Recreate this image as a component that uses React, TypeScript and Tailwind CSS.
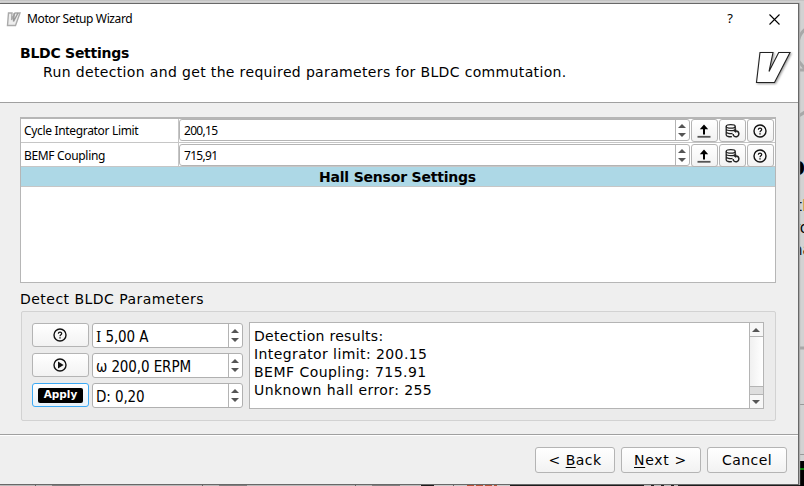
import React from "react";

const dejavu = "font-['DejaVu_Sans',sans-serif]";
const segoe = "font-['Noto_Sans',sans-serif]";

function HelpIcon() {
  return (
    <svg width="14" height="14" viewBox="0 0 14 14" fill="none" stroke="#111" className="mr-px shrink-0">
      <circle cx="7" cy="7" r="6" strokeWidth="1.4" />
      <path d="M5.300 5.700c.1-2 3.400-2 3.400-.1C8.700 6.900 7 6.700 7 8.200" strokeWidth="1.2" />
      <path d="M7 9.300v1.300" strokeWidth="1.4" />
    </svg>
  );
}

function PlayIcon() {
  return (
    <svg width="14" height="14" viewBox="0 0 14 14" className="mr-px shrink-0">
      <circle cx="7" cy="7" r="6" fill="none" stroke="#111" strokeWidth="1.4" />
      <path d="M5 3.600 10.600 7 5 10.400z" fill="#111" />
    </svg>
  );
}

function UploadIcon() {
  return (
    <svg width="14" height="14" viewBox="0 0 14 14" className="mr-px shrink-0">
      <path d="M7 .5 11.200 5.200H8v5.300H6V5.200H2.800z" fill="#000" />
      <path d="M.5 12.800h13" stroke="#555" strokeWidth="1.800" />
    </svg>
  );
}

function DatabaseIcon() {
  return (
    <svg width="15" height="14" viewBox="0 0 15 14" fill="none" stroke="#222" strokeWidth="1.300" className="shrink-0">
      <ellipse cx="5.700" cy="2.400" rx="4.500" ry="1.700" />
      <path d="M1.200 2.400v2.500c0 2.200 9 2.200 9 0V2.400M1.200 5v2.800c0 1.700 4 2.100 6.300 1.500M1.200 8v2.900c0 1.600 3.400 2.100 5.700 1.700" />
      <path d="M10.800 6.900c3.600-.3 4.100 4.900 1 5.800-2 .5-3.700-.8-3.700-2.700" strokeWidth="1.500" />
      <path d="M11.200 4.600v4.400L8.300 6.900z" fill="#222" stroke="none" />
    </svg>
  );
}

function Arrows() {
  return (
    <span className="flex h-full w-[14px] shrink-0 flex-col items-center justify-center gap-[5px] border-l border-[#b4b4b4] pr-px">
      <svg width="8" height="4" viewBox="0 0 8 4"><path d="M0 4 4 0l4 4z" fill="#555" /></svg>
      <svg width="8" height="4" viewBox="0 0 8 4"><path d="M0 0h8L4 4z" fill="#555" /></svg>
    </span>
  );
}

const face = "flex shrink-0 items-center justify-center rounded-[3px] border border-[#b4b4b4] bg-linear-to-b from-white to-[#f2f2f2]";

function ParamRow({ label, value, second = false }: { label: string; value: string; second?: boolean }) {
  return (
    <div className={`flex h-6 border-b border-[#c6c6c6] text-[12px] ${segoe}`}>
      <div className={`flex w-[158px] items-center border-r border-[#c6c6c6] pl-[3px] tracking-[-0.33px] ${second ? "pt-[2px]" : ""}`}>{label}</div>
      <div className={`flex ${second ? "pt-px" : ""}`}>
        <div className="flex h-[22px] w-[511px] items-center overflow-hidden rounded-[3px] border border-[#b4b4b4] bg-white">
          <span className="flex-1 pl-1 pt-px tracking-[-0.7px]">{value}</span>
          <Arrows />
        </div>
        <div className="ml-px flex gap-px">
          <button className={`h-[23px] w-[27px] ${face}`}><UploadIcon /></button>
          <button className={`h-[23px] w-[27px] ${face}`}><DatabaseIcon /></button>
          <button className={`h-[23px] w-[27px] ${face}`}><HelpIcon /></button>
        </div>
      </div>
    </div>
  );
}

function DetectRow({ icon, value, active = false }: { icon: React.ReactNode; value: React.ReactNode; active?: boolean }) {
  return (
    <div className="flex h-[25px] gap-[3px]">
      <button className={active
        ? "flex h-6 w-[57px] shrink-0 items-center justify-center rounded-[3px] border border-[#3daaf5] bg-linear-to-b from-white to-[#e8f2fa]"
        : `h-6 w-[57px] ${face}`}>{icon}</button>
      <div className="flex h-[25px] w-[151px] items-center overflow-hidden rounded-[3px] border border-[#b0b0b0] bg-white">
        <span className="flex-1 whitespace-nowrap pl-[3px] pt-[3px] font-['DejaVu_Sans_Condensed','DejaVu_Sans',sans-serif] text-[15px] tracking-[-0.1px] [font-stretch:condensed]">{value}</span>
        <Arrows />
      </div>
    </div>
  );
}

function Background() {
  return (
    <svg className="absolute inset-0" width="804" height="486" aria-hidden="true">
      <rect width="804" height="486" fill="#d2d2d2" />
      <path d="M0 .5h804" stroke="#c4c4c4" />
      <path d="M807 28q-8 5-9 15M796 58l10 12h-10M797 117l8-5M797 348h7" fill="none" stroke="#a8a8a8" strokeWidth="3" />
      <path d="M798 404.500h6M798 454.500h6" stroke="#999" />
      <path d="M798 461h6v25h-6z" />
      <path d="M798 469h6" stroke="#087f08" strokeWidth="2" />
      <rect y="485" width="420" height="1" fill="#bdbdbd" />
      <path d="M35.500 485v1M202.500 485v1M355.500 485v1M453.500 485v1" stroke="#555" />
      <path d="M52 485.500h28M219 485.500h28M372 485.500h28" stroke="#777" />
      <path d="M421 485.500h13M510 485.500h294" stroke="#000" />
      <path d="M467 485.500h30" stroke="#b84020" strokeDasharray="7 2" />
      <path d="M644 485.500h34" stroke="#bbb" strokeDasharray="7 3" />
    </svg>
  );
}

export default function App() {
  return (
    <div className={`relative h-[486px] w-[804px] overflow-hidden pt-[3px] text-black ${dejavu}`}>
      <Background />
      <div className="absolute left-[799px] top-[152px] w-[100px] text-[15px]" aria-hidden="true">
        <div className="-ml-[11px] text-[24px] font-bold leading-[30px]">p</div>
        <div className="-ml-[3px] mt-[13px] leading-[22px]">t<span className="text-[#dc9648]">l</span></div>
        <div className="-ml-[5px] leading-[22px]">ro</div>
        <div className="-ml-[6px] leading-[22px]">na</div>
      </div>

      <main className="relative flex h-[482px] w-[799px] flex-col border-b border-r border-t border-[#686868] bg-[#efefef] shadow-[1px_0_1px_#aaa]">
        <header className="h-[99px] shrink-0 border-b border-[#a0a0a0] bg-white">
          <div className={`flex h-[30px] items-center text-[12px] ${segoe}`}>
            <svg className="ml-[6px] shrink-0" width="16" height="15" viewBox="0 0 16 15">
              <path d="M2.500 1H6l-.4 7L9 1h5L9.500 13.500H1.500z" fill="#eee" stroke="#aaa" strokeWidth="1.400" />
              <path d="M8.200 1 7.500 9.500 12 1" fill="none" stroke="#999" strokeWidth="1.400" />
            </svg>
            <span className="ml-[5px] flex-1 tracking-[-0.38px]">Motor Setup Wizard</span>
            <span className="mr-[36px] text-[13px]">?</span>
            <svg className="mr-[18px]" width="11" height="11" viewBox="0 0 11 11"><path d="m.5.5 10 10m0-10-10 10" stroke="#000" strokeWidth="1.100" /></svg>
          </div>
          <div className="flex">
            <div className="flex-1 pl-5 pt-[10px]">
              <h1 className="text-[14px] font-bold leading-[18px] tracking-[-0.26px]">BLDC Settings</h1>
              <p className="whitespace-nowrap pl-[23px] pt-px text-[14px] leading-[18px] tracking-[0.35px]">Run detection and get the required parameters for BLDC commutation.</p>
            </div>
            <svg className="mr-[4px] mt-[15px] drop-shadow-[1px_1px_1px_#999]" width="42" height="36" viewBox="0 0 42 36">
              <path d="M8 3.500H21L17 22.500 26.700 3.500H38L22.500 33.500H4.500z" fill="white" stroke="#222" strokeWidth="1.100" />
            </svg>
          </div>
        </header>

        <section className="ml-5 mr-[22px] mt-[14px] h-[166px] shrink-0 border border-t-2 border-[#b6b6b6] bg-white">
          <ParamRow label="Cycle Integrator Limit" value="200,15" />
          <ParamRow second label="BEMF Coupling" value="715,91" />
          <div className="h-5 border-b border-[#c6c6c6] bg-[#add8e6] pr-px pt-px text-center text-[14px] font-bold leading-[19px] tracking-[-0.2px]">Hall Sensor Settings</div>
        </section>

        <h2 className="ml-5 mt-[7px] text-[14px] leading-[18px] tracking-[0.47px]">Detect BLDC Parameters</h2>
        <section className="ml-[21px] mt-[3px] flex h-[110px] w-[755px] shrink-0 gap-[6px] rounded-[2px] border border-[#d2d2d2] bg-[#ebebeb] pl-[10px] pt-[11px]">
          <div className="flex flex-col gap-[5px]">
            <DetectRow icon={<HelpIcon />} value={<><span className="font-['DejaVu_Serif',serif]">I</span> 5,00 A</>} />
            <DetectRow icon={<PlayIcon />} value="ω 200,0 ERPM" />
            <DetectRow active icon={<span className="flex h-[15px] w-[45px] items-center justify-center rounded-[2px] bg-black text-[10.500px] font-bold text-white">Apply</span>} value="D: 0,20" />
          </div>
          <div className="-mt-px flex h-[87px] w-[515px] border border-[#b4b4b4] bg-white">
            <div className="flex-1 pl-1 pt-[4px] text-[14px] leading-[18px] tracking-[0.41px]">
              <p className="tracking-[0.3px]">Detection results:</p><p>Integrator limit: 200.15</p><p className="tracking-[0.47px]">BEMF Coupling: 715.91</p><p>Unknown hall error: 255</p>
            </div>
            <div className="flex w-[14px] flex-col border-l border-[#b4b4b4] bg-[#f7f7f7]">
              <span className="flex h-[14px] items-center justify-center border-b border-[#b4b4b4] pr-px"><svg width="8" height="4"><path d="M0 4 4 0l4 4z" fill="#555" /></svg></span>
              <span className="flex-1 bg-linear-to-r from-[#f0f0f0] to-white" />
              <span className="h-[9px] border-y border-[#b4b4b4] bg-[#dedede]" />
              <span className="flex h-[13px] items-center justify-center pr-px"><svg width="8" height="4"><path d="M0 0h8L4 4z" fill="#555" /></svg></span>
            </div>
          </div>
        </section>

        <footer className="mt-[13px] flex flex-1 justify-end gap-[6px] border-t border-[#a0a0a0] pr-[11px] pt-[12px] text-[14px] tracking-[0.45px] shadow-[inset_0_1px_0_white]">
          <button className={`h-[26px] w-20 ${face}`}>&lt;&nbsp;<u className="underline-offset-2">B</u>ack</button>
          <button className={`h-[26px] w-20 pr-px tracking-[0.7px] ${face}`}><u className="underline-offset-2">N</u>ext &gt;</button>
          <button className={`h-[26px] w-20 ${face}`}>Cancel</button>
        </footer>
      </main>
    </div>
  );
}
